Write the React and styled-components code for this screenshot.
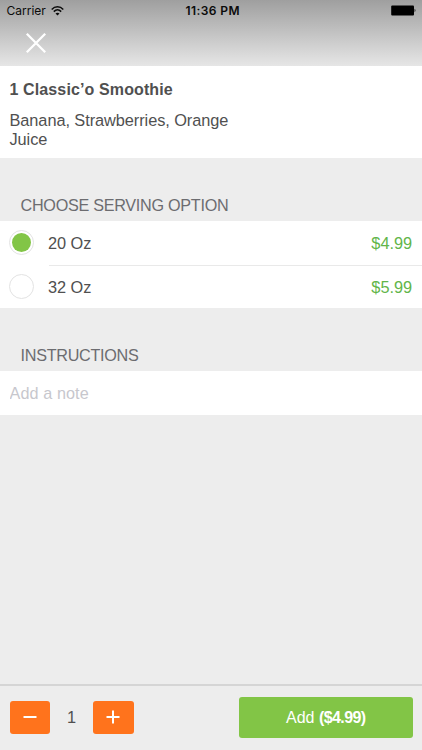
import React, { useState } from 'react';
import styled, { createGlobalStyle } from 'styled-components';

const GlobalStyle = createGlobalStyle`
  * {
    box-sizing: border-box;
  }

  body {
    margin: 0;
    background: #ededed;
    font-family: 'Liberation Sans', Arial, sans-serif;
    color: #505050;
  }

  button, input {
    font-family: inherit;
    border: 0;
    padding: 0;
  }
`;

const Screen = styled.div`
  display: flex;
  flex-direction: column;
  width: 422px;
  height: 750px;
  overflow: hidden;
  background: #ededed;
  font-size: 16.35px;
`;

const Header = styled.header`
  height: 66px;
  background: linear-gradient(#9f9f9f, #e6e6e6);
`;

const StatusBar = styled.div`
  display: grid;
  grid-template-columns: 1fr auto 1fr;
  align-items: center;
  height: 21px;
  padding: 0 6px 0 6.5px;
  font-family: Inter, sans-serif;
  font-size: 12px;
  color: #0b0b0b;
`;

const Carrier = styled.div`
  display: flex;
  align-items: center;
  gap: 5px;
`;

const Clock = styled.div`
  padding-left: 3px;
  font-weight: 600;
  letter-spacing: 0.4px;
`;

const Battery = styled.svg`
  justify-self: end;
`;

const CloseButton = styled.button`
  display: flex;
  margin: 11px 0 0 25px;
  background: none;
`;

const Summary = styled.section`
  height: 92px;
  padding: 14px 9.5px 0;
  background: #fff;
`;

const ItemName = styled.h1`
  margin: 0 0 11px;
  font-size: 16px;
  line-height: 20px;
  letter-spacing: 0.12px;
`;

const Description = styled.p`
  width: 235px;
  margin: 0;
  line-height: 19px;
  letter-spacing: -0.07px;
`;

const SectionTitle = styled.h2`
  height: 63px;
  margin: 0;
  padding: 37px 20.5px 0;
  font-size: 16.2px;
  font-weight: 400;
  line-height: 20px;
  letter-spacing: -0.28px;
  color: #6c6c70;
`;

const OptionList = styled.div`
  height: 87px;
  background: #fff;
`;

const Option = styled.div`
  display: flex;
  align-items: center;
  gap: 14px;
  height: 43.5px;
  padding-left: 9px;
`;

const Radio = styled.span`
  display: flex;
  align-items: center;
  justify-content: center;
  width: 25px;
  height: 25px;
  border: 1px solid #e3e3e3;
  border-radius: 50%;

  &:after {
    content: '';
    width: 19px;
    height: 19px;
    border-radius: 50%;
    background: ${props => (props.$checked ? '#82c546' : 'transparent')};
  }
`;

const OptionBody = styled.div`
  display: flex;
  flex: 1;
  align-items: center;
  justify-content: space-between;
  height: 100%;
  padding: 2px 10px 0 0;
  letter-spacing: -0.05px;
`;

const Divider = styled.div`
  height: 1px;
  margin: 0 0 -1px 49px;
  background: #e9e9e9;
`;

const Price = styled.span`
  color: #62b54a;
`;

const NoteInput = styled.input`
  height: 44px;
  padding: 1px 9.5px 0;
  border-radius: 0;
  outline: 0;
  background: #fff;
  font-size: 16.2px;
  letter-spacing: 0.1px;

  &::placeholder {
    color: #c7c7cd;
  }
`;

const Footer = styled.footer`
  display: flex;
  align-items: center;
  height: 66px;
  margin-top: auto;
  padding: 0 9.5px 2px;
  border-top: 2px solid #d5d5d5;
`;

const StepButton = styled.button`
  display: flex;
  align-items: center;
  justify-content: center;
  width: 40.5px;
  height: 33px;
  border-radius: 3px;
  background: #ff731c;
`;

const Quantity = styled.span`
  width: 43px;
  text-align: center;
`;

const AddButton = styled.button`
  width: 173.5px;
  height: 41px;
  margin-left: auto;
  padding-top: 1px;
  border-radius: 3px;
  background: #82c546;
  color: #fff;
  font-size: 16px;

  strong {
    letter-spacing: -0.6px;
  }
`;

const options = [
  { name: '20 Oz', price: '4.99' },
  { name: '32 Oz', price: '5.99' },
];

const App = () => {
  const [selected, setSelected] = useState(0);
  const [quantity, setQuantity] = useState(1);
  const total = (options[selected].price * quantity).toFixed(2);

  return (
    <Screen>
      <GlobalStyle />
      <Header>
        <StatusBar>
          <Carrier>
            Carrier
            <svg width="13" height="10" viewBox="0 0 13 10" fill="none" stroke="#0b0b0b" strokeWidth="1.5">
              <path d="M.7 3.4C4-.1 9-.1 12.3 3.4M2.8 5.6C5 3.4 8 3.4 10.2 5.6" />
              <path d="M6.5 9.6 4.5 7.5Q6.5 5.8 8.5 7.5Z" fill="#0b0b0b" stroke="none" />
            </svg>
          </Carrier>
          <Clock>11:36 PM</Clock>
          <Battery width="25" height="11" viewBox="0 0 25 11">
            <rect x=".2" y=".5" width="22.8" height="10" rx="1" />
            <path d="M23.6 3.8Q25.3 5.5 23.6 7.2Z" />
          </Battery>
        </StatusBar>
        <CloseButton aria-label="Close">
          <svg width="22" height="22" viewBox="0 0 22 22" stroke="#fff" strokeWidth="2.3">
            <path d="M1.8 1.8 20.2 20.2M20.2 1.8 1.8 20.2" />
          </svg>
        </CloseButton>
      </Header>

      <Summary>
        <ItemName>1 Classic’o Smoothie</ItemName>
        <Description>Banana, Strawberries, Orange Juice</Description>
      </Summary>

      <SectionTitle>CHOOSE SERVING OPTION</SectionTitle>
      <OptionList>
        {options.map((option, index) => (
          <React.Fragment key={option.name}>
            {index > 0 && <Divider />}
            <Option onClick={() => setSelected(index)}>
              <Radio $checked={index === selected} />
              <OptionBody>
                {option.name}
                <Price>${option.price}</Price>
              </OptionBody>
            </Option>
          </React.Fragment>
        ))}
      </OptionList>

      <SectionTitle>INSTRUCTIONS</SectionTitle>
      <NoteInput placeholder="Add a note" />

      <Footer>
        <StepButton aria-label="Remove one" onClick={() => setQuantity(Math.max(1, quantity - 1))}>
          <svg width="14" height="14" viewBox="0 0 14 14" stroke="#fff" strokeWidth="2">
            <path d="M.5 7h13" />
          </svg>
        </StepButton>
        <Quantity>{quantity}</Quantity>
        <StepButton aria-label="Add one" onClick={() => setQuantity(quantity + 1)}>
          <svg width="14" height="14" viewBox="0 0 14 14" stroke="#fff" strokeWidth="2">
            <path d="M.5 7h13M7 .5v13" />
          </svg>
        </StepButton>
        <AddButton>
          Add <strong>(${total})</strong>
        </AddButton>
      </Footer>
    </Screen>
  );
};

export default App;
